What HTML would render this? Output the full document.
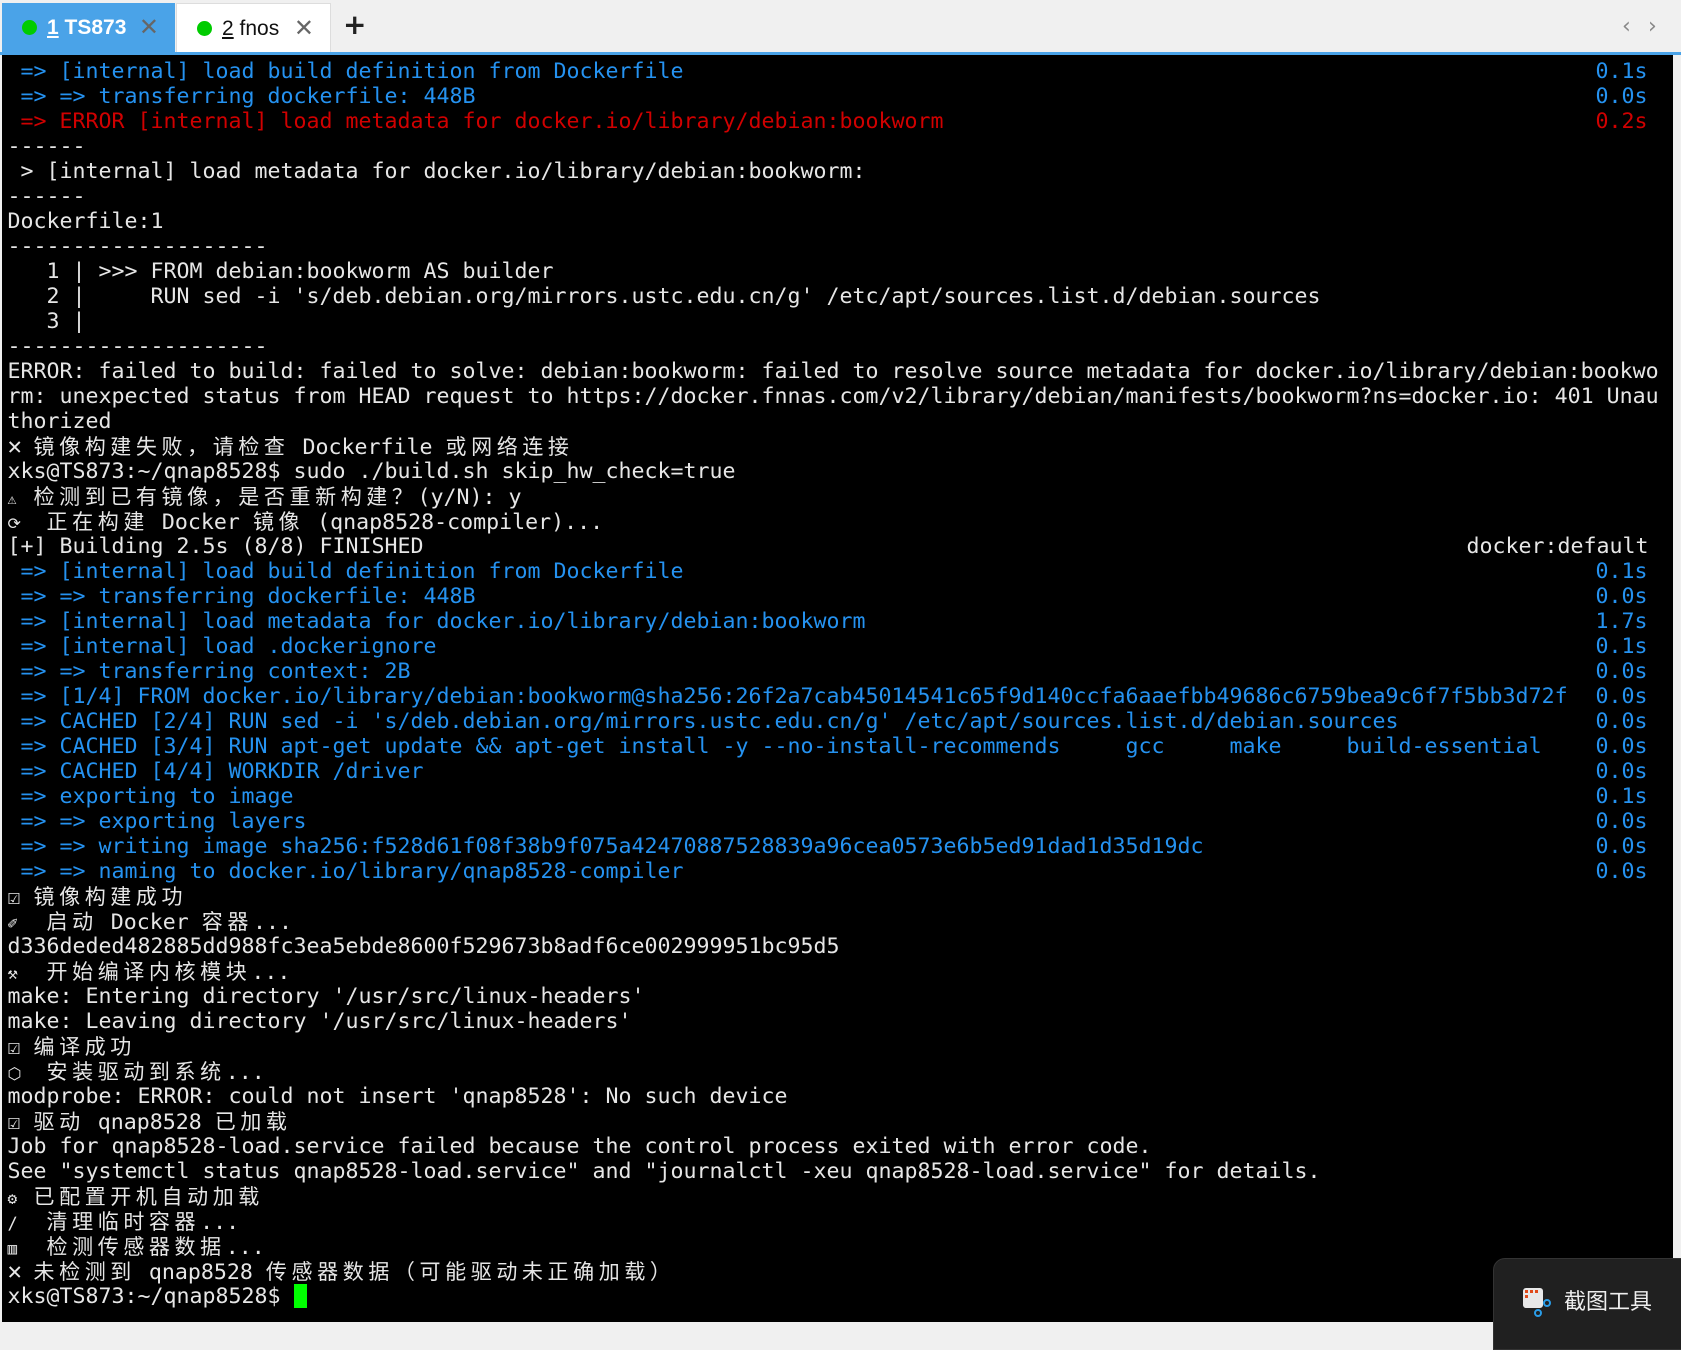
<!DOCTYPE html>
<html><head><meta charset="utf-8"><style>
html,body{margin:0;padding:0;width:1681px;height:1333px;overflow:hidden;background:#f0f0f0;}
#tabs{position:absolute;left:0;top:0;width:1681px;height:52px;background:#f0f0f0;border-bottom:3px solid #4aa3e8;box-sizing:content-box;font-family:"Liberation Sans","DejaVu Sans",sans-serif;}
.tab{position:absolute;top:3px;height:49px;font-size:21px;line-height:49px;}
.t1{left:2px;width:173px;background:#4aa3e8;color:#fff;font-weight:bold;}
.t2{left:176px;width:155px;background:#fff;color:#111;border:1px solid #ddd;border-bottom:none;box-sizing:border-box;}
.dot{position:absolute;left:20px;top:17px;width:15px;height:15px;border-radius:50%;background:#0c0;}
.lbl{position:absolute;left:45px;}
.x{position:absolute;right:16px;top:0;font-weight:normal;font-size:24px;color:#666;}
#term{position:absolute;left:2px;top:55px;width:1671px;height:1267px;background:#000;}
#lines{position:absolute;left:7.5px;top:59px;font-family:"DejaVu Sans Mono","Liberation Mono","Noto Sans CJK SC",monospace;font-size:21.6px;line-height:25px;color:#e6e6e6;}
.l{height:25px;position:relative;white-space:pre;overflow:visible;}
.b{color:#2592f0}.r{color:#d00000}
.tm{position:absolute;left:1588px;top:0;}
.c{font-family:"Noto Sans CJK SC","WenQuanYi Zen Hei",sans-serif;letter-spacing:4.6px;font-size:21px;}
.ic{display:inline-block;width:26px;}
.xx{font-weight:bold;font-size:24px;line-height:20px;}
#cur{display:inline-block;width:13px;height:24px;background:#00ff00;vertical-align:-5px;}
#pop{position:absolute;left:1493px;top:1258px;width:200px;height:90px;background:#202020;border-radius:12px 0 0 0;border:1px solid #333;color:#eee;font-family:"Noto Sans CJK SC",sans-serif;font-size:22px;}
</style></head><body>
<div id="tabs">
<div class="tab t1"><span class="dot"></span><span class="lbl"><u>1</u> TS873</span><span class="x">✕</span></div>
<div class="tab t2"><span class="dot"></span><span class="lbl"><u>2</u> fnos</span><span class="x">✕</span></div>
<div style="position:absolute;left:343px;top:8px;font:bold 28px 'DejaVu Sans',sans-serif;color:#222">+</div>
<div style="position:absolute;left:1622px;top:14px;font:22px 'DejaVu Sans',sans-serif;color:#888">‹</div>
<div style="position:absolute;left:1648px;top:14px;font:22px 'DejaVu Sans',sans-serif;color:#888">›</div>
</div>
<div id="term"></div>
<div id="lines"><div class="l b"> =&gt; [internal] load build definition from Dockerfile<span class="tm">0.1s</span></div><div class="l b"> =&gt; =&gt; transferring dockerfile: 448B<span class="tm">0.0s</span></div><div class="l r"> =&gt; ERROR [internal] load metadata for docker.io/library/debian:bookworm<span class="tm">0.2s</span></div><div class="l">------</div><div class="l"> &gt; [internal] load metadata for docker.io/library/debian:bookworm:</div><div class="l">------</div><div class="l">Dockerfile:1</div><div class="l">--------------------</div><div class="l">   1 | &gt;&gt;&gt; FROM debian:bookworm AS builder</div><div class="l">   2 |     RUN sed -i 's/deb.debian.org/mirrors.ustc.edu.cn/g' /etc/apt/sources.list.d/debian.sources</div><div class="l">   3 |</div><div class="l">--------------------</div><div class="l">ERROR: failed to build: failed to solve: debian:bookworm: failed to resolve source metadata for docker.io/library/debian:bookwo</div><div class="l">rm: unexpected status from HEAD request to https://docker.fnnas.com/v2/library/debian/manifests/bookworm?ns=docker.io: 401 Unau</div><div class="l">thorized</div><div class="l"><span class="ic xx">✕</span><span class="c">镜像构建失败，请检查</span> Dockerfile <span class="c">或网络连接</span></div><div class="l">xks@TS873:~/qnap8528$ sudo ./build.sh skip_hw_check=true</div><div class="l"><span class="ic" style="font-size:15px">⚠</span><span class="c">检测到已有镜像，是否重新构建？</span>(y/N): y</div><div class="l"><span class="ic" style="font-size:16px">⟳</span> <span class="c">正在构建</span> Docker <span class="c">镜像</span> (qnap8528-compiler)...</div><div class="l">[+] Building 2.5s (8/8) FINISHED<span style="position:absolute;left:1459px;top:0">docker:default</span></div><div class="l b"> =&gt; [internal] load build definition from Dockerfile<span class="tm">0.1s</span></div><div class="l b"> =&gt; =&gt; transferring dockerfile: 448B<span class="tm">0.0s</span></div><div class="l b"> =&gt; [internal] load metadata for docker.io/library/debian:bookworm<span class="tm">1.7s</span></div><div class="l b"> =&gt; [internal] load .dockerignore<span class="tm">0.1s</span></div><div class="l b"> =&gt; =&gt; transferring context: 2B<span class="tm">0.0s</span></div><div class="l b"> =&gt; [1/4] FROM docker.io/library/debian:bookworm@sha256:26f2a7cab45014541c65f9d140ccfa6aaefbb49686c6759bea9c6f7f5bb3d72f<span class="tm">0.0s</span></div><div class="l b"> =&gt; CACHED [2/4] RUN sed -i 's/deb.debian.org/mirrors.ustc.edu.cn/g' /etc/apt/sources.list.d/debian.sources<span class="tm">0.0s</span></div><div class="l b"> =&gt; CACHED [3/4] RUN apt-get update &amp;&amp; apt-get install -y --no-install-recommends     gcc     make     build-essential<span class="tm">0.0s</span></div><div class="l b"> =&gt; CACHED [4/4] WORKDIR /driver<span class="tm">0.0s</span></div><div class="l b"> =&gt; exporting to image<span class="tm">0.1s</span></div><div class="l b"> =&gt; =&gt; exporting layers<span class="tm">0.0s</span></div><div class="l b"> =&gt; =&gt; writing image sha256:f528d61f08f38b9f075a42470887528839a96cea0573e6b5ed91dad1d35d19dc<span class="tm">0.0s</span></div><div class="l b"> =&gt; =&gt; naming to docker.io/library/qnap8528-compiler<span class="tm">0.0s</span></div><div class="l"><span class="ic">☑</span><span class="c">镜像构建成功</span></div><div class="l"><span class="ic" style="font-size:17px">✐</span> <span class="c">启动</span> Docker <span class="c">容器</span>...</div><div class="l">d336deded482885dd988fc3ea5ebde8600f529673b8adf6ce002999951bc95d5</div><div class="l"><span class="ic" style="font-size:17px">⚒</span> <span class="c">开始编译内核模块</span>...</div><div class="l">make: Entering directory '/usr/src/linux-headers'</div><div class="l">make: Leaving directory '/usr/src/linux-headers'</div><div class="l"><span class="ic">☑</span><span class="c">编译成功</span></div><div class="l"><span class="ic" style="font-size:16px">⬡</span> <span class="c">安装驱动到系统</span>...</div><div class="l">modprobe: ERROR: could not insert 'qnap8528': No such device</div><div class="l"><span class="ic">☑</span><span class="c">驱动</span> qnap8528 <span class="c">已加载</span></div><div class="l">Job for qnap8528-load.service failed because the control process exited with error code.</div><div class="l">See "systemctl status qnap8528-load.service" and "journalctl -xeu qnap8528-load.service" for details.</div><div class="l"><span class="ic" style="font-size:16px">⚙</span><span class="c">已配置开机自动加载</span></div><div class="l"><span class="ic" style="font-size:17px">∕</span> <span class="c">清理临时容器</span>...</div><div class="l"><span class="ic" style="font-size:16px">▥</span> <span class="c">检测传感器数据</span>...</div><div class="l"><span class="ic xx">✕</span><span class="c">未检测到</span> qnap8528 <span class="c">传感器数据（可能驱动未正确加载）</span></div><div class="l">xks@TS873:~/qnap8528$ <span id="cur"></span></div></div>
<div id="pop">
<svg style="position:absolute;left:28px;top:28px" width="30" height="30" viewBox="0 0 30 30"><rect x="1" y="1" width="20" height="20" rx="3" fill="#e8e8e8"/><rect x="3" y="3" width="3" height="3" fill="#e04a1a"/><rect x="8" y="3" width="3" height="3" fill="#e04a1a"/><rect x="13" y="3" width="3" height="3" fill="#e04a1a"/><rect x="3" y="8" width="3" height="3" fill="#e04a1a"/><circle cx="25" cy="16" r="3" fill="none" stroke="#2a9de8" stroke-width="2"/><circle cx="16" cy="26" r="3" fill="none" stroke="#2a9de8" stroke-width="2"/></svg>
<span style="position:absolute;left:70px;top:25px">截图工具</span>
</div>
</body></html>
